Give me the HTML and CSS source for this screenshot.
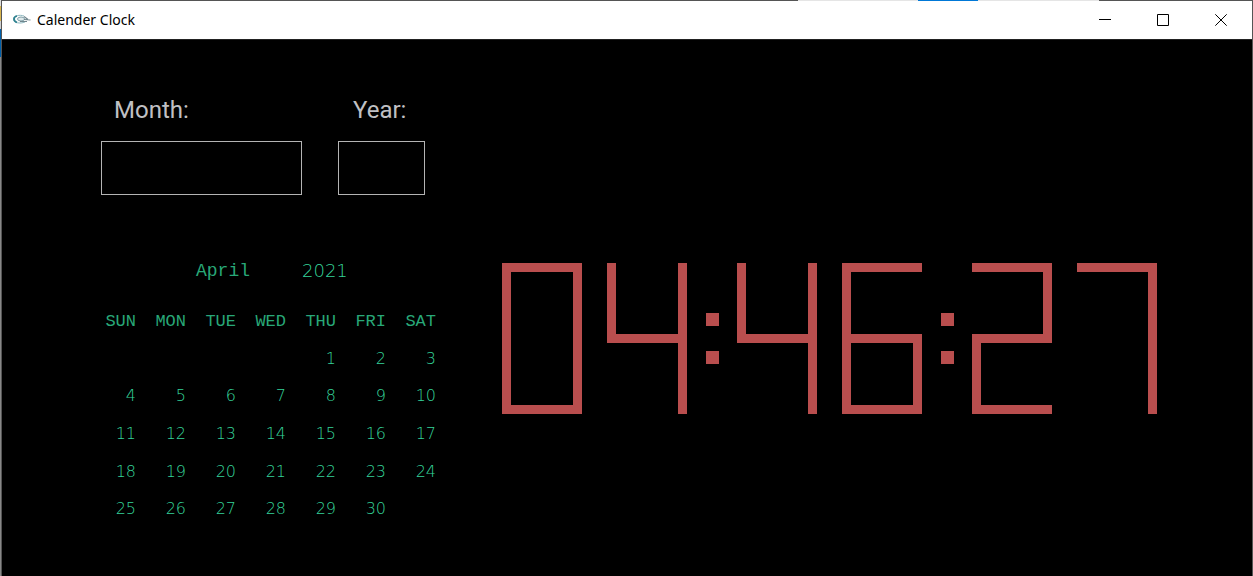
FILE: index.html
```html
<!DOCTYPE html>
<html lang="en">
<head>
<meta charset="utf-8">
<title>Calender Clock</title>
<link rel="stylesheet" href="styles.css">
</head>
<body>
<div class="desktop-edge"></div>
<div class="window">
  <div class="top-edge"></div>
  <header class="titlebar">
    <svg class="logo" viewBox="0 0 20 12" aria-hidden="true">
      <path d="M12 2C8 .5 1.500 1.500 1.500 5C1.500 9 8 10 13 8" fill="none" stroke="#8fb8c0" stroke-width="1"/>
      <path d="M5 2C1 3 1 7 5 8.500" fill="none" stroke="#2f8290" stroke-width="1.800"/>
      <ellipse cx="9" cy="5" rx="3.500" ry="2" fill="#dfe9eb" stroke="#7d9fa8"/>
      <path d="M8 7.500L15 7.500M12 2.500L16 5.500M12 5.500L18.500 6" fill="none" stroke="#71868d" stroke-width="1.200"/>
    </svg>
    <h1 class="title">Calender Clock</h1>
    <div class="controls">
      <button class="control" aria-label="Minimize"><svg viewBox="0 0 12 12"><path d="M0 5.500H12"/></svg></button>
      <button class="control" aria-label="Maximize"><svg viewBox="0 0 12 12"><path d="M.5 .5H11.500V11.500H.5Z"/></svg></button>
      <button class="control" aria-label="Close"><svg viewBox="0 0 12 12"><path d="M.3 .3L11.700 11.700M11.700 .3L.3 11.700"/></svg></button>
    </div>
  </header>
  <main class="client">
    <section class="side">
      <form class="picker">
        <div class="field">
          <label class="label" for="month">Month:</label>
          <input class="entry entry-month" id="month" type="text">
        </div>
        <div class="field">
          <label class="label label-year" for="year">Year:</label>
          <input class="entry entry-year" id="year" type="text">
        </div>
      </form>
      <h2 class="heading"><span>April</span><span class="number">2021</span></h2>
      <table class="calendar">
        <thead>
          <tr><th>SUN</th><th>MON</th><th>TUE</th><th>WED</th><th>THU</th><th>FRI</th><th>SAT</th></tr>
        </thead>
        <tbody>
          <tr><td></td><td></td><td></td><td></td><td>1</td><td>2</td><td>3</td></tr>
          <tr><td>4</td><td>5</td><td>6</td><td>7</td><td>8</td><td>9</td><td>10</td></tr>
          <tr><td>11</td><td>12</td><td>13</td><td>14</td><td>15</td><td>16</td><td>17</td></tr>
          <tr><td>18</td><td>19</td><td>20</td><td>21</td><td>22</td><td>23</td><td>24</td></tr>
          <tr><td>25</td><td>26</td><td>27</td><td>28</td><td>29</td><td>30</td><td></td></tr>
        </tbody>
      </table>
    </section>
    <section class="clock" role="img" aria-label="04:46:27">
      <div class="pair">
        <div class="digit"><i class="seg a"></i><i class="seg b"></i><i class="seg c"></i><i class="seg d"></i><i class="seg e"></i><i class="seg f"></i></div>
        <div class="digit"><i class="seg b"></i><i class="seg c"></i><i class="seg f"></i><i class="seg g"></i></div>
      </div>
      <div class="colon"><i class="dot"></i><i class="dot"></i></div>
      <div class="pair">
        <div class="digit"><i class="seg b"></i><i class="seg c"></i><i class="seg f"></i><i class="seg g"></i></div>
        <div class="digit"><i class="seg a"></i><i class="seg c"></i><i class="seg d"></i><i class="seg e"></i><i class="seg f"></i><i class="seg g"></i></div>
      </div>
      <div class="colon"><i class="dot"></i><i class="dot"></i></div>
      <div class="pair">
        <div class="digit"><i class="seg a"></i><i class="seg b"></i><i class="seg d"></i><i class="seg e"></i><i class="seg g"></i></div>
        <div class="digit"><i class="seg a"></i><i class="seg b"></i><i class="seg c"></i></div>
      </div>
    </section>
  </main>
</div>
</body>
</html>
```
FILE: styles.css
```css
* { box-sizing: border-box; }

body {
  margin: 0;
  min-height: 100vh;
  display: flex;
  background: #000;
}

.desktop-edge {
  width: 2px;
  border-right: 1px solid #555;
  background: linear-gradient(#ddd 6px, #d9b64f 6px 21px, #d0d0d0 21px 29px, #0060aa 29px 57px, #888 57px);
}

.window {
  flex: 1;
  display: flex;
  flex-direction: column;
  border-right: 1px solid #555;
}

.top-edge {
  height: 1px;
  background: linear-gradient(90deg, #555 796px, #e5e5e5 796px 916px, #0078d7 916px 976px, #e5e5e5 976px 1097px, #555 1097px);
}

.titlebar {
  display: flex;
  align-items: center;
  height: 38px;
  padding: 0 2px 0 10px;
  background: #fff;
}

.logo {
  width: 20px;
  height: 12px;
}

.title {
  flex: 1;
  margin: 0 0 0 5px;
  font: 400 14px/20px "Noto Sans", sans-serif;
  color: #000;
}

.controls { display: flex; }

.control {
  display: flex;
  align-items: center;
  justify-content: center;
  width: 58px;
  height: 38px;
  padding: 0;
  border: 0;
  background: none;
}

.control svg {
  width: 12px;
  height: 12px;
  fill: none;
  stroke: #000;
  stroke-width: 1;
}

.client {
  flex: 1;
  display: flex;
  align-items: flex-start;
  gap: 66px;
  padding: 56px 0 48px 84px;
  border-top: 1px solid #222;
  background: #000;
}

.side { width: 350px; }

.picker {
  display: flex;
  gap: 36px;
  padding-left: 15px;
}

.field {
  display: flex;
  flex-direction: column;
  gap: 17px;
}

.label {
  padding-left: 13px;
  font: 400 24px/28px Roboto, sans-serif;
  color: #c0c0c4;
}

.label-year { padding-left: 15px; }

.entry {
  height: 54px;
  padding: 0 12px;
  border: 1px solid #b4b4b4;
  border-radius: 0;
  outline: 0;
  background: #000;
  color: #c0c0c4;
  font: 400 24px/28px Roboto, sans-serif;
}

.entry-month { width: 201px; }
.entry-year { width: 87px; }

.heading {
  display: flex;
  gap: 52px;
  margin: 64px 0 20px;
  padding-left: 110px;
  font: 400 18px/24px "Liberation Mono", monospace;
  color: #28a878;
}

.number {
  font: 200 18px/24px "DejaVu Sans", sans-serif;
  color: #34d399;
}

.calendar {
  width: 350px;
  height: 225px;
  table-layout: fixed;
  border-collapse: collapse;
  color: #28a878;
}

.calendar th,
.calendar td {
  height: 37px;
  padding: 0;
  text-align: right;
  vertical-align: middle;
}

.calendar th { font: 400 17px/24px "Liberation Mono", monospace; }

.calendar td {
  font: 200 16px/24px "DejaVu Sans", sans-serif;
  color: #34d399;
}

.clock {
  display: flex;
  gap: 18px;
  margin-top: 167px;
}

.pair {
  display: flex;
  gap: 25px;
}

.digit {
  display: grid;
  grid-template-columns: 9px 62px 9px;
  grid-template-rows: 9px 62px 9px 62px 9px;
}

.seg, .dot { background: #b94e4e; }

.a { grid-area: 1 / 1 / 2 / 4; }
.b { grid-area: 1 / 3 / 4 / 4; }
.c { grid-area: 3 / 3 / 6 / 4; }
.d { grid-area: 5 / 1 / 6 / 4; }
.e { grid-area: 3 / 1 / 6 / 2; }
.f { grid-area: 1 / 1 / 4 / 2; }
.g { grid-area: 3 / 1 / 4 / 4; }

.colon {
  display: flex;
  flex-direction: column;
  justify-content: center;
  align-items: center;
  gap: 25px;
  width: 14px;
}

.dot {
  width: 13px;
  height: 13px;
}
```
